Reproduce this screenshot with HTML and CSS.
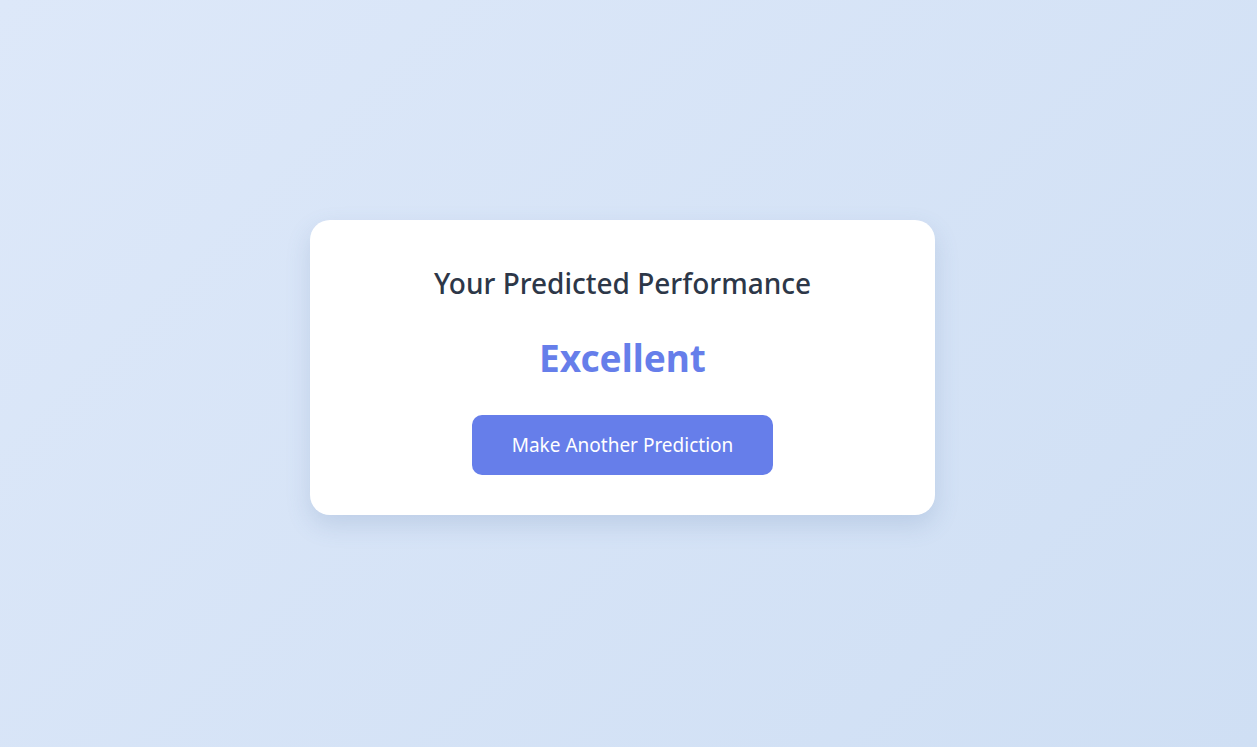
FILE: index.html
```html
<!DOCTYPE html>
<html lang="en">
<head>
<meta charset="utf-8">
<title>Your Predicted Performance</title>
<link rel="stylesheet" href="styles.css">
</head>
<body>
<main class="page">
  <section class="card">
    <h2 class="title">Your Predicted Performance</h2>
    <div class="result">Excellent</div>
    <button class="btn" type="button">Make Another Prediction</button>
  </section>
</main>
</body>
</html>
```

FILE: styles.css
```css
* { box-sizing: border-box; }
html, body { margin: 0; padding: 0; }
body {
  font-family: "Noto Sans", "Open Sans", sans-serif;
  background: linear-gradient(135deg, #dde8f9 0%, #cfdff4 100%);
  min-height: 747px;
}
.page {
  min-height: 747px;
  display: flex;
  align-items: center;
  justify-content: center;
  padding: 0 12px 12px 0;
}
.card {
  width: 625px;
  height: 295px;
  background: #ffffff;
  border-radius: 20px;
  box-shadow: 0 10px 25px rgba(80, 110, 160, 0.18);
  display: flex;
  flex-direction: column;
  align-items: center;
  padding-top: 43px;
}
.title {
  margin: 0;
  font-size: 28px;
  font-weight: 500;
  color: #2d3748;
  line-height: 40px;
}
.result {
  margin-top: 30px;
  font-size: 37px;
  font-weight: 700;
  color: #667eea;
  line-height: 50px;
}
.btn {
  margin-top: 32px;
  width: 301px;
  height: 60px;
  border: none;
  border-radius: 10px;
  background: #667eea;
  color: #ffffff;
  font-family: inherit;
  font-size: 19px;
  cursor: pointer;
}
```
